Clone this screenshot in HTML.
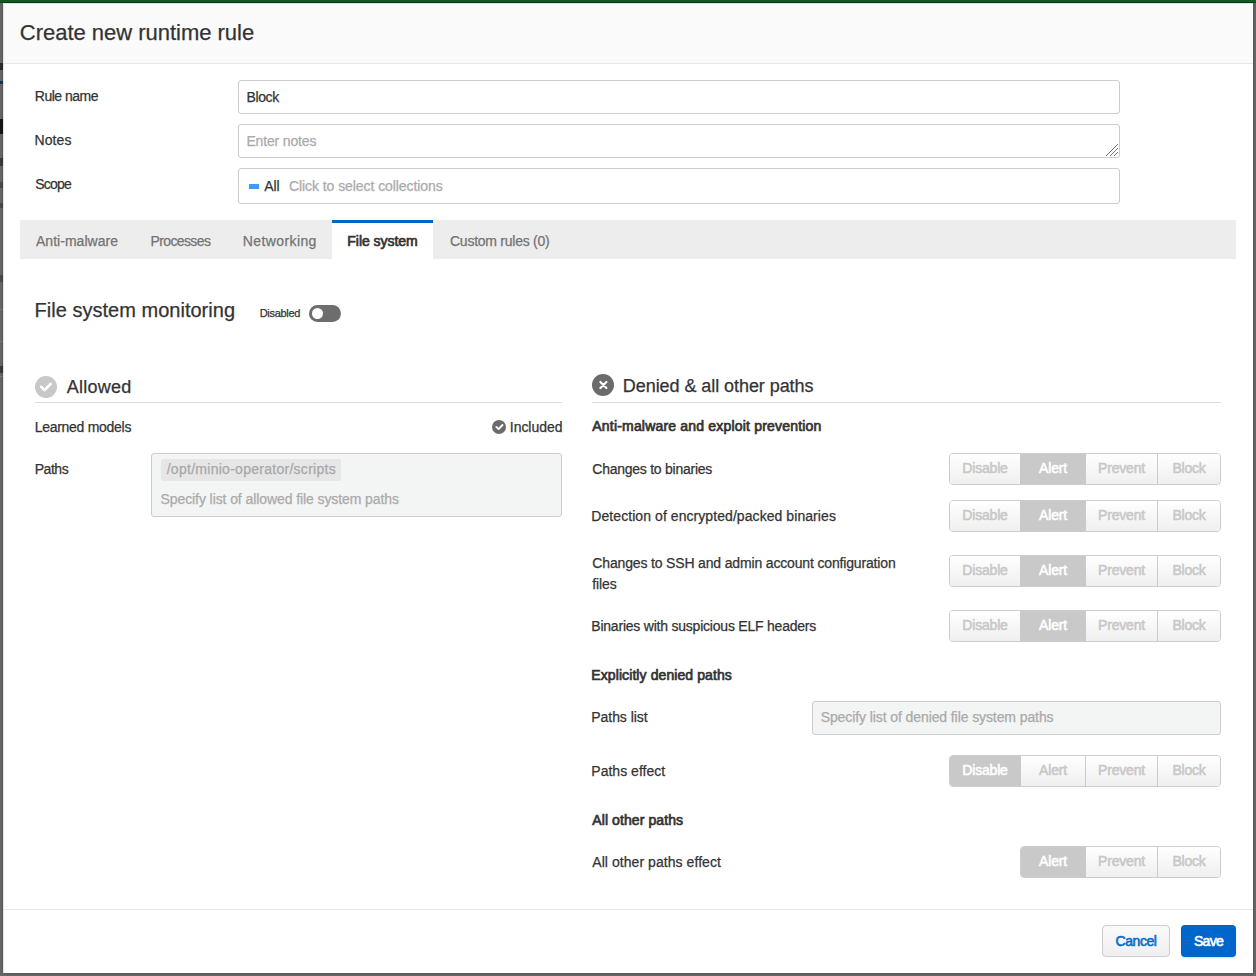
<!DOCTYPE html><html><head><meta charset="utf-8"><style>
html,body{margin:0;padding:0;}
body{width:1256px;height:976px;position:relative;overflow:hidden;font-family:"Liberation Sans", sans-serif;background:#666;}
.t{position:absolute;white-space:nowrap;line-height:1;}
.r{position:absolute;}
.grp{position:absolute;display:flex;border:1px solid #ccc;border-radius:4px;box-sizing:border-box;overflow:hidden;}
.b{height:100%;box-sizing:border-box;border-left:1px solid #ccc;background:linear-gradient(#fff,#efefef);color:#c8c8c8;font-size:14px;font-weight:normal;-webkit-text-stroke:0.55px currentColor;letter-spacing:-0.2px;text-align:center;line-height:28px;}
.b:first-child{border-left:none;}
.b.act{background:#c9c9c9;color:#fff;border-left-color:#c9c9c9;}
.b.act + .b{border-left-color:#c9c9c9;}
.btn{position:absolute;box-sizing:border-box;border-radius:4px;font-size:14px;font-weight:bold;text-align:center;line-height:30px;}
.cancel{border:1px solid #ccc;background:linear-gradient(#fafafa,#efefef);color:#0a6ccc;font-size:14px;font-weight:normal;-webkit-text-stroke:0.6px currentColor;letter-spacing:-0.45px;}
.save{background:#0066cc;color:#fff;line-height:32px;font-size:14px;font-weight:normal;-webkit-text-stroke:0.6px currentColor;letter-spacing:-0.7px;box-shadow:0 1px 2px rgba(0,0,0,0.15);}
</style></head><body>
<div class="r" style="left:0.0px;top:0px;width:1256px;height:976px;background:#666;"></div>
<div class="r" style="left:0.0px;top:0px;width:1256px;height:3px;background:#105a28;"></div>
<div class="r" style="left:0.0px;top:2px;width:1256px;height:1px;background:#02480f;"></div>
<div class="r" style="left:7.0px;top:0px;width:1px;height:0px;"></div>
<div class="r" style="left:0.0px;top:63px;width:3px;height:7px;background:#2a2a2a;"></div>
<div class="r" style="left:0.0px;top:81px;width:3px;height:3px;background:#0d3563;"></div>
<div class="r" style="left:0.0px;top:119px;width:3px;height:15px;background:#161616;"></div>
<div class="r" style="left:0.0px;top:158px;width:3px;height:8px;background:#3a3a3a;"></div>
<div class="r" style="left:0.0px;top:182px;width:3px;height:6px;background:#4a4a4a;"></div>
<div class="r" style="left:0.0px;top:203px;width:3px;height:5px;background:#4a4a4a;"></div>
<div class="r" style="left:0.0px;top:275px;width:3px;height:7px;background:#4a4a4a;"></div>
<div class="r" style="left:0.0px;top:366px;width:3px;height:7px;background:#3a3a3a;"></div>
<div class="r" style="left:0.0px;top:309px;width:3px;height:1px;background:#7a7a7a;"></div>
<div class="r" style="left:0.0px;top:341px;width:3px;height:1px;background:#7a7a7a;"></div>
<div class="r" style="left:0.0px;top:376px;width:3px;height:1px;background:#7a7a7a;"></div>
<div class="r" style="left:3.0px;top:3px;width:1250px;height:970px;background:#fff;box-shadow:0 0 2px rgba(0,0,0,0.35);"></div>
<div class="r" style="left:3.0px;top:3px;width:1250px;height:60px;background:#fafafa;"></div>
<div class="r" style="left:3.0px;top:63px;width:1250px;height:1px;background:#e6e6e6;"></div>
<div class="r" style="left:3.0px;top:3px;width:1250px;height:1px;background:#e0dee0;"></div>
<div class="r" style="left:3.0px;top:4px;width:1250px;height:1px;background:#fff;"></div>
<div class="r" style="left:3.0px;top:3px;width:1px;height:970px;background:#e4e4e4;"></div>
<div class="t" style="left:19.8px;top:21.5px;font-size:22px;color:#333;font-weight:normal;letter-spacing:-0.020px;-webkit-text-stroke:0.25px currentColor;">Create new runtime rule</div>
<div class="t" style="left:34.8px;top:89.1px;font-size:14px;color:#333;font-weight:normal;letter-spacing:-0.490px;-webkit-text-stroke:0.25px currentColor;">Rule name</div>
<div class="t" style="left:34.5px;top:133.2px;font-size:14px;color:#333;font-weight:normal;letter-spacing:0.107px;-webkit-text-stroke:0.25px currentColor;">Notes</div>
<div class="t" style="left:35.3px;top:177.1px;font-size:14px;color:#333;font-weight:normal;letter-spacing:-0.778px;-webkit-text-stroke:0.25px currentColor;">Scope</div>
<div class="r" style="left:238.0px;top:80px;width:882px;height:34px;border:1px solid #ccc;border-radius:3px;box-sizing:border-box;background:#fff;"></div>
<div class="t" style="left:246.4px;top:89.9px;font-size:14px;color:#333;font-weight:normal;letter-spacing:-0.334px;-webkit-text-stroke:0.25px currentColor;">Block</div>
<div class="r" style="left:238.0px;top:124px;width:882px;height:34px;border:1px solid #ccc;border-radius:3px;box-sizing:border-box;background:#fff;"></div>
<div class="t" style="left:246.4px;top:133.8px;font-size:14px;color:#aaa;font-weight:normal;letter-spacing:-0.160px;-webkit-text-stroke:0.25px currentColor;">Enter notes</div>
<div class="r" style="left:238.0px;top:168px;width:882px;height:36px;border:1px solid #ccc;border-radius:3px;box-sizing:border-box;background:#fff;"></div>
<div class="r" style="left:249.0px;top:184px;width:10px;height:5px;background:#3e9cf5;"></div>
<div class="t" style="left:264.2px;top:179.0px;font-size:14px;color:#333;font-weight:normal;letter-spacing:-0.124px;-webkit-text-stroke:0.25px currentColor;">All</div>
<div class="t" style="left:289.0px;top:179.0px;font-size:14px;color:#aaa;font-weight:normal;letter-spacing:-0.070px;-webkit-text-stroke:0.25px currentColor;">Click to select collections</div>
<div class="r" style="left:20.0px;top:220px;width:1216px;height:39px;background:#ededed;"></div>
<div class="r" style="left:332.0px;top:220px;width:101px;height:39px;background:#fff;"></div>
<div class="r" style="left:332.0px;top:220px;width:101px;height:3px;background:#0066cc;"></div>
<div class="t" style="left:36.0px;top:234.0px;font-size:14px;color:#737373;font-weight:normal;letter-spacing:0.027px;-webkit-text-stroke:0.25px currentColor;">Anti-malware</div>
<div class="t" style="left:150.6px;top:234.0px;font-size:14px;color:#737373;font-weight:normal;letter-spacing:-0.632px;-webkit-text-stroke:0.25px currentColor;">Processes</div>
<div class="t" style="left:242.8px;top:234.0px;font-size:14px;color:#737373;font-weight:normal;letter-spacing:0.395px;-webkit-text-stroke:0.25px currentColor;">Networking</div>
<div class="t" style="left:347.3px;top:234.0px;font-size:14px;color:#333;font-weight:normal;letter-spacing:-0.042px;-webkit-text-stroke:0.7px currentColor;">File system</div>
<div class="t" style="left:450.0px;top:234.0px;font-size:14px;color:#737373;font-weight:normal;letter-spacing:-0.254px;-webkit-text-stroke:0.25px currentColor;">Custom rules (0)</div>
<div class="t" style="left:34.5px;top:300.1px;font-size:20px;color:#333;font-weight:normal;letter-spacing:0.022px;-webkit-text-stroke:0.25px currentColor;">File system monitoring</div>
<div class="t" style="left:259.7px;top:307.6px;font-size:11px;color:#333;font-weight:normal;letter-spacing:-0.298px;-webkit-text-stroke:0.25px currentColor;">Disabled</div>
<div class="r" style="left:309.0px;top:305px;width:32px;height:17px;background:#6d6d6d;border-radius:9px;"></div>
<div class="r" style="left:312.0px;top:308px;width:11px;height:11px;background:#fff;border-radius:50%;"></div>
<div class="r" style="left:35.0px;top:376px;width:22px;height:22px;background:#c8c8c8;border-radius:50%;"></div>
<div class="t" style="left:66.7px;top:377.8px;font-size:18px;color:#333;font-weight:normal;letter-spacing:0.246px;-webkit-text-stroke:0.25px currentColor;">Allowed</div>
<div class="r" style="left:35.0px;top:402px;width:527px;height:1px;background:#d8dce0;"></div>
<div class="t" style="left:34.7px;top:420.0px;font-size:14px;color:#333;font-weight:normal;letter-spacing:-0.285px;-webkit-text-stroke:0.25px currentColor;">Learned models</div>
<div class="r" style="left:492.0px;top:420px;width:14px;height:14px;background:#6b6b6b;border-radius:50%;"></div>
<div class="t" style="left:509.8px;top:419.7px;font-size:14px;color:#333;font-weight:normal;letter-spacing:-0.035px;-webkit-text-stroke:0.25px currentColor;">Included</div>
<div class="t" style="left:34.7px;top:462.1px;font-size:14px;color:#333;font-weight:normal;letter-spacing:-0.450px;-webkit-text-stroke:0.25px currentColor;">Paths</div>
<div class="r" style="left:151.0px;top:453px;width:411px;height:64px;background:#f3f4f4;border:1px solid #ccc;border-radius:3px;box-sizing:border-box;"></div>
<div class="r" style="left:161.0px;top:459px;width:180px;height:22px;background:#e6e6e6;border-radius:2px;"></div>
<div class="t" style="left:166.7px;top:461.6px;font-size:14px;color:#a8a8a8;font-weight:normal;letter-spacing:0.275px;-webkit-text-stroke:0.25px currentColor;">/opt/minio-operator/scripts</div>
<div class="t" style="left:160.5px;top:492.1px;font-size:14px;color:#aaa;font-weight:normal;letter-spacing:-0.087px;-webkit-text-stroke:0.25px currentColor;">Specify list of allowed file system paths</div>
<div class="r" style="left:592.0px;top:374px;width:22px;height:22px;background:#6b6b6b;border-radius:50%;"></div>
<div class="t" style="left:622.8px;top:377.1px;font-size:18px;color:#333;font-weight:normal;letter-spacing:-0.062px;-webkit-text-stroke:0.25px currentColor;">Denied &amp; all other paths</div>
<div class="r" style="left:592.0px;top:402px;width:629px;height:1px;background:#d8dce0;"></div>
<div class="t" style="left:592.3px;top:419.2px;font-size:14px;color:#333;font-weight:normal;letter-spacing:0.189px;-webkit-text-stroke:0.7px currentColor;">Anti-malware and exploit prevention</div>
<div class="t" style="left:592.3px;top:462.0px;font-size:14px;color:#333;font-weight:normal;letter-spacing:-0.251px;-webkit-text-stroke:0.25px currentColor;">Changes to binaries</div>
<div class="grp" style="left:949.0px;top:453px;height:32px;"><div class="b" style="width:70px;">Disable</div><div class="b act" style="width:65px;">Alert</div><div class="b" style="width:72px;">Prevent</div><div class="b" style="width:63px;">Block</div></div>
<div class="t" style="left:591.3px;top:508.7px;font-size:14px;color:#333;font-weight:normal;letter-spacing:0.069px;-webkit-text-stroke:0.25px currentColor;">Detection of encrypted/packed binaries</div>
<div class="grp" style="left:949.0px;top:500px;height:32px;"><div class="b" style="width:70px;">Disable</div><div class="b act" style="width:65px;">Alert</div><div class="b" style="width:72px;">Prevent</div><div class="b" style="width:63px;">Block</div></div>
<div class="t" style="left:592.3px;top:556.4px;font-size:14px;color:#333;font-weight:normal;letter-spacing:-0.159px;-webkit-text-stroke:0.25px currentColor;">Changes to SSH and admin account configuration</div>
<div class="t" style="left:592.3px;top:576.8px;font-size:14px;color:#333;font-weight:normal;letter-spacing:-0.099px;-webkit-text-stroke:0.25px currentColor;">files</div>
<div class="grp" style="left:949.0px;top:555px;height:32px;"><div class="b" style="width:70px;">Disable</div><div class="b act" style="width:65px;">Alert</div><div class="b" style="width:72px;">Prevent</div><div class="b" style="width:63px;">Block</div></div>
<div class="t" style="left:591.3px;top:618.9px;font-size:14px;color:#333;font-weight:normal;letter-spacing:-0.219px;-webkit-text-stroke:0.25px currentColor;">Binaries with suspicious ELF headers</div>
<div class="grp" style="left:949.0px;top:610px;height:32px;"><div class="b" style="width:70px;">Disable</div><div class="b act" style="width:65px;">Alert</div><div class="b" style="width:72px;">Prevent</div><div class="b" style="width:63px;">Block</div></div>
<div class="t" style="left:591.3px;top:668.2px;font-size:14px;color:#333;font-weight:normal;letter-spacing:0.090px;-webkit-text-stroke:0.7px currentColor;">Explicitly denied paths</div>
<div class="t" style="left:591.3px;top:709.9px;font-size:14px;color:#333;font-weight:normal;letter-spacing:-0.057px;-webkit-text-stroke:0.25px currentColor;">Paths list</div>
<div class="r" style="left:812.0px;top:701px;width:409px;height:34px;background:#f3f4f4;border:1px solid #ccc;border-radius:3px;box-sizing:border-box;"></div>
<div class="t" style="left:820.7px;top:709.9px;font-size:14px;color:#aaa;font-weight:normal;letter-spacing:-0.094px;-webkit-text-stroke:0.25px currentColor;">Specify list of denied file system paths</div>
<div class="t" style="left:591.3px;top:764.1px;font-size:14px;color:#333;font-weight:normal;letter-spacing:0.019px;-webkit-text-stroke:0.25px currentColor;">Paths effect</div>
<div class="grp" style="left:949.0px;top:755px;height:32px;"><div class="b act" style="width:70px;">Disable</div><div class="b" style="width:65px;">Alert</div><div class="b" style="width:72px;">Prevent</div><div class="b" style="width:63px;">Block</div></div>
<div class="t" style="left:592.3px;top:812.5px;font-size:14px;color:#333;font-weight:normal;letter-spacing:0.093px;-webkit-text-stroke:0.7px currentColor;">All other paths</div>
<div class="t" style="left:592.3px;top:854.9px;font-size:14px;color:#333;font-weight:normal;letter-spacing:0.058px;-webkit-text-stroke:0.25px currentColor;">All other paths effect</div>
<div class="grp" style="left:1020.0px;top:846px;height:32px;"><div class="b act" style="width:64px;">Alert</div><div class="b" style="width:72px;">Prevent</div><div class="b" style="width:63px;">Block</div></div>
<svg class="r" style="left:0;top:0;" width="1256" height="976" viewBox="0 0 1256 976">
<path d="M41.2 386.8 L44.6 390.1 L50.6 384" fill="none" stroke="#fff" stroke-width="2.6" stroke-linecap="round" stroke-linejoin="round"/>
<path d="M600.4 382 L606.4 388 M606.4 382 L600.4 388" fill="none" stroke="#fff" stroke-width="2.2" stroke-linecap="round"/>
<path d="M496.3 426.9 L498.6 429.1 L502.5 425" fill="none" stroke="#fff" stroke-width="1.9" stroke-linecap="round" stroke-linejoin="round"/>
<path d="M1106 156 L1118 144 M1110 156 L1118 148 M1114 156 L1118 152" fill="none" stroke="#777" stroke-width="1"/>
</svg>
<div class="r" style="left:3.0px;top:909px;width:1250px;height:1px;background:#e6e6e6;"></div>
<div class="btn cancel" style="left:1102px;top:925px;width:68px;height:32px;">Cancel</div>
<div class="btn save" style="left:1181px;top:925px;width:55px;height:32px;">Save</div>
</body></html>
